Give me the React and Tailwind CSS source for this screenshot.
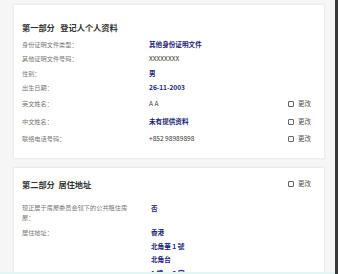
export default function App() {
  const Check = () => (
    <div className="ml-auto flex items-center gap-[4px] pr-[5px]">
      <span className="block w-[6px] h-[6px] border border-[#666] rounded-[1px] bg-white" />
      <span className="text-[6.5px] text-[#555]">更改</span>
    </div>
  );
  const Row = ({ label, value, bold = true, check = false }) => (
    <div className={`flex items-center ${check ? "h-[17.5px]" : "h-[14.5px]"}`}>
      <div className="w-[127px] text-[6.2px] text-[#777]">{label}</div>
      <div className={`text-[6.6px] ${bold ? "font-bold text-[#1c1c7a]" : "text-[#333]"}`}>{value}</div>
      {check && <Check />}
    </div>
  );
  return (
    <div
      className="min-h-[274px] bg-[#f6f6f6] px-[13px] pt-[4px] pb-[10px]"
      style={{ fontFamily: '"Noto Sans CJK SC", "Noto Sans", sans-serif' }}
    >
      <div className="bg-white border border-[#ececec] shadow-[0_0_2px_rgba(0,0,0,0.05)] px-[8px] pt-[16px] pb-[10px]">
        <div className="text-[8.2px] font-semibold text-[#333] mb-[4px] whitespace-pre">第一部分   登记人个人资料</div>
        <Row label="身份证明文件类型：" value="其他身份证明文件" />
        <Row label="其他证明文件号码：" value="XXXXXXXX" bold={false} />
        <Row label="性别：" value="男" />
        <Row label="出生日期：" value="26-11-2003" />
        <Row label="英文姓名：" value="A A" bold={false} check />
        <Row label="中文姓名：" value="未有提供资料" check />
        <Row label="联络电话号码：" value="+852 98989898" bold={false} check />
      </div>
      <div className="mt-[8px] bg-white border border-[#ececec] shadow-[0_0_2px_rgba(0,0,0,0.05)] px-[8px] pt-[10px] pb-[8px]">
        <div className="flex items-center">
          <div className="text-[8.2px] font-semibold text-[#333] whitespace-pre">第二部分  居住地址</div>
          <Check />
        </div>
        <div className="flex mt-[13px]">
          <div className="w-[112px] text-[6.2px] leading-[10px] text-[#777]">现正居于房屋委员会辖下的公共租住房屋：</div>
          <div className="ml-[17px] text-[6.6px] leading-[10px] font-bold text-[#1c1c7a]">否</div>
        </div>
        <div className="flex mt-[3px]">
          <div className="w-[112px] text-[6.2px] leading-[13.5px] text-[#777]">居住地址：</div>
          <div className="ml-[17px] text-[6.6px] leading-[13.5px] font-bold text-[#1c1c7a]">
            <div>香港</div>
            <div>北角華 1 號</div>
            <div>北角台</div>
            <div>1 樓 ， 2 室</div>
          </div>
        </div>
      </div>
      <div className="fixed left-0 right-0 bottom-0 h-[2px] bg-[#e3f6f3]" />
      <div className="fixed top-0 right-0 bottom-0 w-[3px] bg-[#3a3a3a]" />
    </div>
  );
}
